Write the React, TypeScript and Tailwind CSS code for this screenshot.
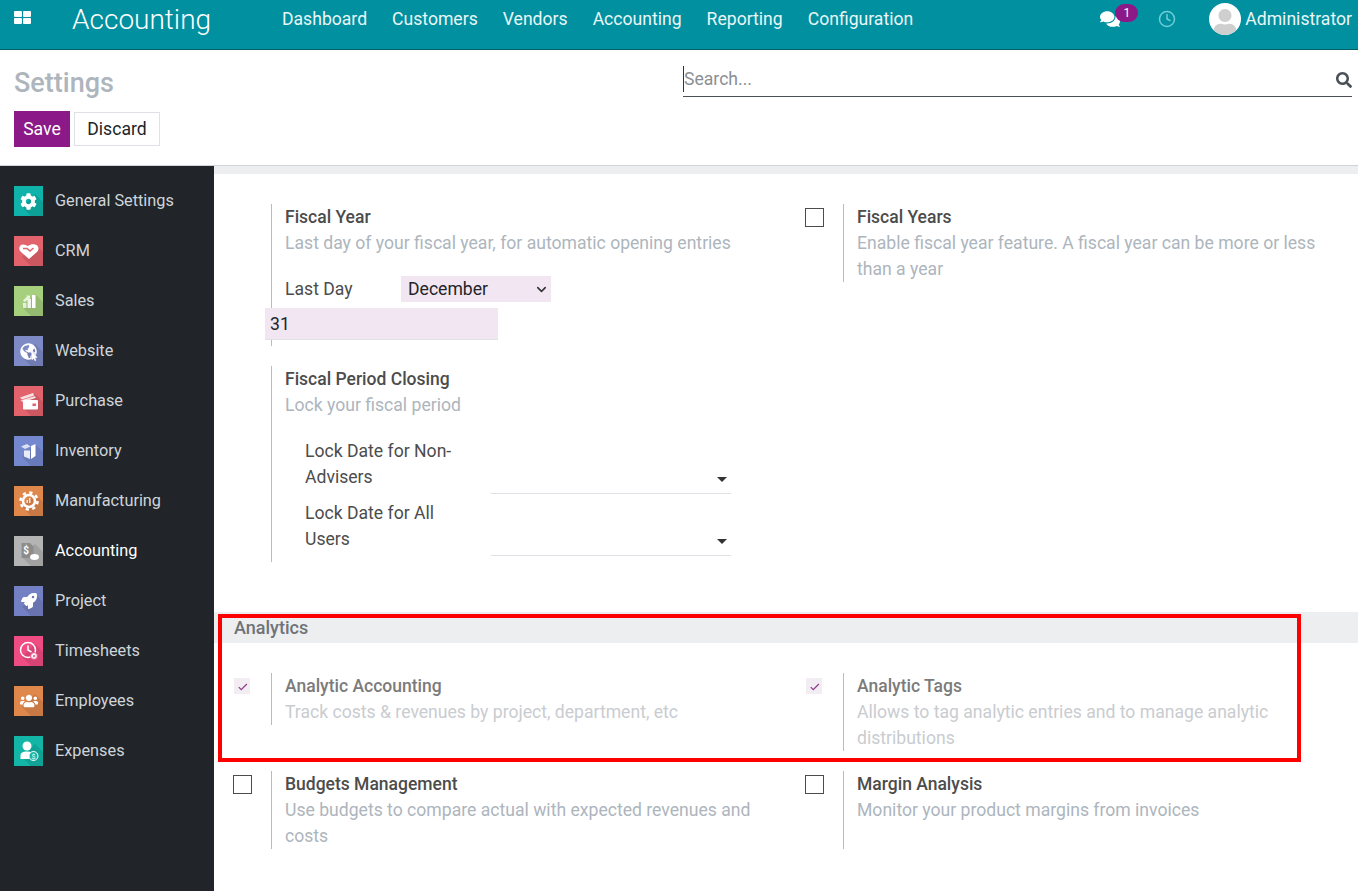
import { ReactNode } from "react";
import { ChevronDown } from "lucide-react";
import { FaCog, FaRocket, FaSearch, FaUsers, FaComments, FaUser, FaGlobeAmericas, FaMousePointer } from "react-icons/fa";
import { FiClock } from "react-icons/fi";
import { BiCheck } from "react-icons/bi";

const NAV = ["Dashboard", "Customers", "Vendors", "Accounting", "Reporting", "Configuration"];

// app tile drawings, all in a 30x30 box
const HandshakeIcon = (
  <svg viewBox="0 0 30 30" className="h-[30px] w-[30px]">
    <path d="M15 23 6.500 15.500C4 13 5.500 8.500 9 8.500c2 0 3.500 1 4.500 1.500l3-1.200C18 8 20 8.300 21 8.500c3.500 .500 4.500 4.500 2.500 7Z" fill="#fff" />
    <path d="M9 12.500h4l3 2.500 3.500-3" fill="none" stroke="#e2636c" strokeWidth="1.500" />
  </svg>
);

const SalesIcon = (
  <svg viewBox="0 0 30 30" className="h-[30px] w-[30px]">
    <rect x="9" y="17" width="3.500" height="5" fill="#fff" fillOpacity=".75" />
    <rect x="13.500" y="13" width="3.500" height="9" fill="#fff" fillOpacity=".85" />
    <rect x="18" y="9" width="3.500" height="13" fill="#fff" />
    <path d="M9 14.500 13 10.500l-1-1h4v4l-1-1-4.500 3.500Z" fill="#fff" fillOpacity=".75" />
  </svg>
);

const WebsiteIcon = (
  <div className="relative h-[17px] w-[17px]">
    <FaGlobeAmericas size={17} />
    <FaMousePointer size={9} className="absolute bottom-[-1px] right-[-2px] text-white drop-shadow-[0_0_1px_#7d8ac6]" />
  </div>
);

const PurchaseIcon = (
  <svg viewBox="0 0 30 30" className="h-[30px] w-[30px]">
    <path d="M6 11.500 19 7l1.200 2.500L8 13.500Z" fill="#fff" fillOpacity=".8" />
    <path d="M6.500 14.500 21 10l.8 2L9 16Z" fill="#fff" fillOpacity=".8" />
    <rect x="9" y="14" width="15" height="9.500" rx="1" fill="#fff" />
    <rect x="18.500" y="17.500" width="3.500" height="2.500" fill="#e2636c" />
  </svg>
);

const InventoryIcon = (
  <svg viewBox="0 0 30 30" className="h-[30px] w-[30px]">
    <path d="M7 10.500 13 8l3.500 2.500-5.500 2.500Z" fill="#fff" fillOpacity=".75" />
    <path d="M17 10 21.500 8v12l-4.500 3Z" fill="#fff" />
    <path d="M10 14.500l6 0V23l-6-2.500Z" fill="#fff" fillOpacity=".85" />
  </svg>
);

const ManufacturingIcon = (
  <svg viewBox="0 0 30 30" className="h-[30px] w-[30px]">
    <circle cx="15" cy="15" r="8.500" fill="none" stroke="#fff" strokeWidth="2.500" strokeDasharray="3.300 3.370" />
    <circle cx="15" cy="15" r="6" fill="none" stroke="#fff" strokeWidth="2.500" />
    <path d="M12.500 17v-3h1.500v3ZM15 17v-5h1.500v5Z" fill="#fff" fillOpacity=".8" />
  </svg>
);

const AccountingIcon = (
  <svg viewBox="0 0 30 30" className="h-[30px] w-[30px]">
    <path d="M7.500 7H16l3.500 3.500V22h-12Z" fill="#8c8c8c" />
    <text x="12" y="18" fontSize="10" fontWeight="700" fill="#fff" textAnchor="middle" fontFamily="Roboto, sans-serif">$</text>
    <ellipse cx="20.500" cy="21" rx="4.500" ry="3" fill="#fff" />
  </svg>
);

const TimesheetsIcon = (
  <svg viewBox="0 0 30 30" className="h-[30px] w-[30px]">
    <circle cx="14" cy="14" r="7.500" fill="none" stroke="#fff" strokeWidth="1.500" />
    <path d="M14 9.500V14l3.500 2" fill="none" stroke="#fff" strokeWidth="1.500" />
    <circle cx="20" cy="20" r="3.500" fill="#fff" fillOpacity=".85" stroke="#ee4c82" strokeWidth="1" />
    <circle cx="20" cy="20" r="1" fill="#ee4c82" />
  </svg>
);

const ExpensesIcon = (
  <svg viewBox="0 0 30 30" className="h-[30px] w-[30px]">
    <circle cx="13" cy="10" r="4.500" fill="#fff" />
    <path d="M6.500 23v-3.500c0-3 2.500-4 6.500-4 2 0 3.500 .3 4.500 1l-2 6.500Z" fill="#fff" />
    <circle cx="19.500" cy="20" r="4.500" fill="#12b5a6" stroke="#fff" strokeWidth="1" />
    <text x="19.500" y="22.500" fontSize="7" fill="#fff" textAnchor="middle" fontFamily="Roboto, sans-serif">$</text>
  </svg>
);

const APPS: { name: string; tile: string; icon: ReactNode; active?: boolean }[] = [
  { name: "General Settings", tile: "bg-[#0fb3a9]", icon: <FaCog size={17} /> },
  { name: "CRM", tile: "bg-[#e2636c]", icon: HandshakeIcon },
  { name: "Sales", tile: "bg-[#a6cf7e]", icon: SalesIcon },
  { name: "Website", tile: "bg-[#7d8ac6]", icon: WebsiteIcon },
  { name: "Purchase", tile: "bg-[#e2636c]", icon: PurchaseIcon },
  { name: "Inventory", tile: "bg-[#7488d0]", icon: InventoryIcon },
  { name: "Manufacturing", tile: "bg-[#e0874c]", icon: ManufacturingIcon },
  { name: "Accounting", tile: "bg-[#b4b4b4]", icon: AccountingIcon, active: true },
  { name: "Project", tile: "bg-[#7480c4]", icon: <FaRocket size={16} /> },
  { name: "Timesheets", tile: "bg-[#ee4c82]", icon: TimesheetsIcon },
  { name: "Employees", tile: "bg-[#e0874c]", icon: <FaUsers size={18} /> },
  { name: "Expenses", tile: "bg-[#12b5a6]", icon: ExpensesIcon },
];

function Checkbox({ checked }: { checked?: boolean }) {
  if (checked) {
    return (
      <span className="flex h-[16px] w-[16px] items-center justify-center bg-[#f1edf3] text-[#8f3f8c]">
        <BiCheck size={15} />
      </span>
    );
  }
  return <span className="-ml-[1.500px] block h-[19px] w-[19px] border-[1.500px] border-[#4c4c4c] bg-white" />;
}

function Setting({
  title,
  help,
  checkbox,
  checked,
  muted,
  lineClass = "",
  children,
}: {
  title: string;
  help: string;
  checkbox?: boolean;
  checked?: boolean;
  muted?: boolean;
  lineClass?: string;
  children?: ReactNode;
}) {
  return (
    <div className="flex w-[572px] items-start">
      <div className="flex h-[24px] w-[57px] shrink-0 items-center pl-[20px] pt-[2px]">
        {checkbox && <Checkbox checked={checked} />}
      </div>
      <div className={`border-l border-[#b9bcbf] pl-[13px] ${lineClass}`}>
        <div className={`w-[470px] text-[17.500px] font-medium ${muted ? "text-[#7b7b7b]" : "text-[#4c4c4c]"}`}>{title}</div>
        <div className={`w-[470px] ${muted ? "text-[#c9ccd0]" : "text-[#adb5bd]"}`}>{help}</div>
        {children}
      </div>
    </div>
  );
}

function LockDate({ label }: { label: string }) {
  return (
    <div className="flex h-[52px] items-start">
      <div className="w-[206px] shrink-0 pl-[20px] pr-[20px] text-[#4c4c4c]">{label}</div>
      <div className="relative mt-[26px] h-[30px] w-[240px] shrink-0 border-b border-[#dee2e6]">
        <span className="absolute right-[4px] top-[13px] h-0 w-0 border-x-[5px] border-t-[5px] border-x-transparent border-t-[#333]" />
      </div>
    </div>
  );
}

export default function App() {
  return (
    <div className="flex h-[891px] w-[1358px] flex-col overflow-hidden bg-white font-['Roboto',sans-serif] text-[17.600px] leading-[26px]">
      {/* NAVBAR */}
      <header className="flex h-[50px] shrink-0 items-center border-b border-[#045f69] bg-[#00909f] pb-[2px] text-white">
        <div className="ml-[14px] grid h-[13px] w-[17px] -translate-y-[6px] grid-cols-2 gap-[1.500px]">
          <span className="rounded-[1px] bg-white" />
          <span className="rounded-[1px] bg-white" />
          <span className="rounded-[1px] bg-white" />
          <span className="rounded-[1px] bg-white" />
        </div>
        <div className="ml-[41px] w-[210px] -translate-y-[4px] text-[28px] font-light leading-[38px]">Accounting</div>
        <nav className="flex -translate-y-[5px] gap-[25px] text-[#e9f6f7]">
          {NAV.map((n) => (
            <span key={n}>{n}</span>
          ))}
        </nav>
        <div className="ml-auto flex -translate-y-[5px] items-center">
          <div className="relative mr-[38px]">
            <FaComments size={20} className="text-white" />
            <span className="absolute -top-[5px] left-[15px] flex h-[18px] w-[23px] items-center justify-center rounded-full bg-[#8b1a88] text-[12px] leading-none">
              1
            </span>
          </div>
          <FiClock size={18} className="mr-[33px] text-[#6fcdd6]" />
          <div className="relative mr-[4px] h-[32px] w-[32px] overflow-hidden rounded-full bg-white">
            <FaUser size={26} className="absolute left-[3px] top-[6px] text-[#cfcfcf]" />
          </div>
          <span className="mr-[6px] text-[#e9f6f7]">Administrator</span>
        </div>
      </header>

      {/* CONTROL PANEL */}
      <div className="flex h-[116px] shrink-0 justify-between border-b border-[#ced4da]">
        <div className="pl-[14px]">
          <h1 className="mt-[15px] text-[27px] font-medium leading-[36px] text-[#adb5bd]">Settings</h1>
          <div className="mt-[10px] flex items-center gap-[4px]">
            <button className="h-[36px] w-[56px] bg-[#8b1a88] text-white">Save</button>
            <button className="h-[34px] w-[86px] border border-[#dee2e6] bg-white text-[#212529]">Discard</button>
          </div>
        </div>
        <div className="relative mr-[6px] mt-[15px] flex h-[32px] w-[669px] items-start justify-between border-b border-[#495057] pt-[1px]">
          <span className="border-l border-[#333] text-[#8a8f94]">Search...</span>
          <FaSearch size={16} className="mt-[6px] text-[#495057]" />
        </div>
      </div>

      <div className="flex min-h-0 flex-1">
        {/* SIDEBAR */}
        <aside className="w-[214px] shrink-0 bg-[#212529] pl-[14px] pt-[20px]">
          {APPS.map((a) => (
            <div key={a.name} className="mb-[20px] flex h-[30px] items-center gap-[12px]">
              <span className={`relative flex h-[30px] w-[29px] shrink-0 items-center justify-center overflow-hidden text-white ${a.tile}`}>
                <svg viewBox="0 0 29 30" className="absolute inset-0 h-full w-full">
                  <polygon points="8,21 21,8 29,16 29,30 17,30" fill="#000" fillOpacity=".1" />
                </svg>
                <span className="relative flex items-center justify-center">{a.icon}</span>
              </span>
              <span className={`text-[16.300px] ${a.active ? "text-white" : "text-[#ced4da]"}`}>{a.name}</span>
            </div>
          ))}
        </aside>

        {/* MAIN */}
        <main className="relative min-w-0 flex-1">
          <div className="h-[8px] bg-[#eceef0]" />

          <div className="mt-[30px] flex">
            <div className="flex flex-col gap-[20px]">
              <Setting title="Fiscal Year" help="Last day of your fiscal year, for automatic opening entries" lineClass="h-[142px]">
                <div className="mt-[20px] flex h-[26px] items-center">
                  <span className="w-[116px] text-[#4c4c4c]">Last Day</span>
                  <div className="relative h-[26px] w-[150px] bg-[#f3e6f3]">
                    <select
                      defaultValue="December"
                      className="h-[23px] w-full appearance-none bg-transparent pl-[7px] text-[#212529] outline-none"
                    >
                      <option>December</option>
                    </select>
                    <ChevronDown size={15} strokeWidth={2.5} className="absolute right-[2px] top-[6px] text-[#333]" />
                  </div>
                </div>
                <input
                  readOnly
                  value="31"
                  className="-ml-[20px] mt-[6px] block h-[32px] w-[233px] border-b border-[#dee2e6] bg-[#f3e6f3] pl-[5px] text-[#212529] outline-none"
                />
              </Setting>
              <Setting title="Fiscal Period Closing" help="Lock your fiscal period" lineClass="h-[196px]">
                <div className="mt-[20px] flex flex-col gap-[10px]">
                  <LockDate label="Lock Date for Non-Advisers" />
                  <LockDate label="Lock Date for All Users" />
                </div>
              </Setting>
            </div>
            <Setting
              checkbox
              title="Fiscal Years"
              help="Enable fiscal year feature. A fiscal year can be more or less than a year"
            />
          </div>

          <div className="mt-[50px] h-[31px] bg-[#eceef0] pl-[20px] text-[18px] font-medium leading-[31px] text-[#6f7377]">
            Analytics
          </div>

          <div className="mt-[30px] flex">
            <Setting checkbox checked muted title="Analytic Accounting" help="Track costs & revenues by project, department, etc" />
            <Setting checkbox checked muted title="Analytic Tags" help="Allows to tag analytic entries and to manage analytic distributions" />
          </div>

          <div className="mt-[20px] flex">
            <Setting checkbox title="Budgets Management" help="Use budgets to compare actual with expected revenues and costs" />
            <Setting checkbox title="Margin Analysis" help="Monitor your product margins from invoices" lineClass="h-[78px]" />
          </div>

          {/* highlight box */}
          <div className="pointer-events-none absolute left-[4px] top-[448px] h-[148px] w-[1083px] border-[4px] border-[#ff0000]" />
        </main>
      </div>
    </div>
  );
}
